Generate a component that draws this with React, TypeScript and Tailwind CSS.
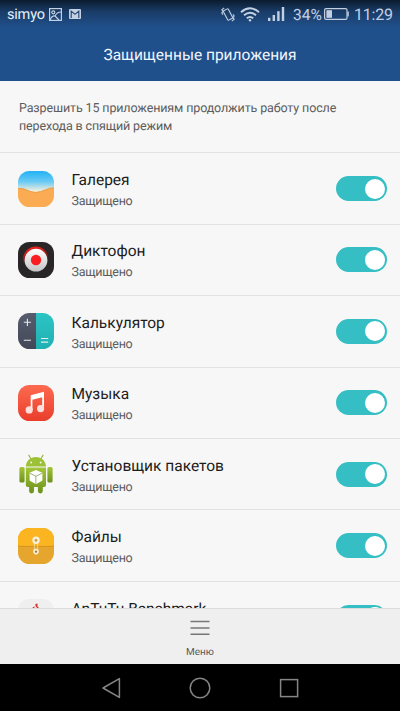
import type React from "react";

interface AppItem {
  name: string;
  icon: React.ComponentType;
}

function GalleryIcon() {
  return (
    <svg viewBox="0 0 36 36" className="w-9 h-9">
      <defs>
        <linearGradient id="sky" x1="0" y1="0" x2="0" y2="1">
          <stop offset="0" stopColor="#22b2f7" />
          <stop offset="0.3" stopColor="#6bcbf3" />
          <stop offset="0.56" stopColor="#f3efdf" />
        </linearGradient>
        <clipPath id="tile">
          <rect width="36" height="36" rx="11.5" />
        </clipPath>
      </defs>
      <g clipPath="url(#tile)">
        <rect width="36" height="36" fill="url(#sky)" />
        <path d="M0 17.2C6 16 11 21 17.5 21S30 16.2 36 16.4V36H0Z" fill="#fbab52" />
        <path d="M0 17.6C6 16.4 11 21.4 17.5 21.4S30 16.6 36 16.8" fill="none" stroke="#e8a050" strokeWidth="1" />
      </g>
    </svg>
  );
}

function RecorderIcon() {
  return (
    <svg viewBox="0 0 36 36" className="w-9 h-9">
      <defs>
        <linearGradient id="knob" x1="0" y1="0" x2="0" y2="1">
          <stop offset="0" stopColor="#ffffff" />
          <stop offset="1" stopColor="#c3c4c6" />
        </linearGradient>
        <linearGradient id="ring" x1="0.35" y1="0" x2="0.55" y2="1">
          <stop offset="0" stopColor="#f5231f" />
          <stop offset="0.3" stopColor="#b01c1b" />
          <stop offset="0.58" stopColor="#282627" />
        </linearGradient>
      </defs>
      <rect width="36" height="36" rx="11.5" fill="#282627" />
      <circle cx="17.8" cy="17.6" r="13" fill="url(#ring)" />
      <circle cx="18" cy="18.2" r="11.4" fill="url(#knob)" />
      <circle cx="18" cy="18" r="5.2" fill="#fb1d20" />
    </svg>
  );
}

function CalculatorIcon() {
  return (
    <svg viewBox="0 0 36 36" className="w-9 h-9">
      <defs>
        <linearGradient id="calcLeft" x1="0" y1="0" x2="0" y2="1">
          <stop offset="0" stopColor="#575d6e" />
          <stop offset="1" stopColor="#434857" />
        </linearGradient>
        <linearGradient id="calcRight" x1="0" y1="0" x2="0" y2="1">
          <stop offset="0" stopColor="#2dc4c4" />
          <stop offset="1" stopColor="#1fb0b2" />
        </linearGradient>
      </defs>
      <path d="M18 0H11.5A11.5 11.5 0 0 0 0 11.5V24.5A11.5 11.5 0 0 0 11.5 36H18Z" fill="url(#calcLeft)" />
      <path d="M18 0H24.5A11.5 11.5 0 0 1 36 11.5V24.5A11.5 11.5 0 0 1 24.5 36H18Z" fill="url(#calcRight)" />
      <path d="M5.8 9.3H13M9.4 5.7V12.9M5.8 27.3H13M23 25.5H30.2M23 29.1H30.2" stroke="#e3eef0" strokeWidth="1.1" />
    </svg>
  );
}

function MusicIcon() {
  return (
    <svg viewBox="0 0 36 36" className="w-9 h-9">
      <defs>
        <linearGradient id="music" x1="0" y1="0" x2="0" y2="1">
          <stop offset="0" stopColor="#fd6a50" />
          <stop offset="1" stopColor="#e93e2b" />
        </linearGradient>
      </defs>
      <rect width="36" height="36" rx="11.5" fill="url(#music)" />
      <path d="M12.7 10.2L26 6.8V23.5H24.2V12.3L14.4 14.8V25H12.7Z" fill="#fff" />
      <circle cx="11.2" cy="24.9" r="3.6" fill="#fde0dc" />
      <circle cx="22.6" cy="23.6" r="3.6" fill="#fde0dc" />
    </svg>
  );
}

function InstallerIcon() {
  return (
    <svg viewBox="0 0 36 40" className="w-9 h-10">
      <defs>
        <linearGradient id="droid" x1="0" y1="0" x2="0" y2="1">
          <stop offset="0" stopColor="#a2c538" />
          <stop offset="1" stopColor="#6d921c" />
        </linearGradient>
      </defs>
      <path d="M12.6 4.2L10.8 1.2M23.2 4.2L25 1.2" stroke="#8fb32f" strokeWidth="1.1" strokeLinecap="round" />
      <path d="M7.8 12.6C8.2 6.6 12.4 3 17.9 3S27.6 6.6 28 12.6Z" fill="#9dc136" />
      <circle cx="13.2" cy="8.5" r="0.9" fill="#fff" />
      <circle cx="22.6" cy="8.5" r="0.9" fill="#fff" />
      <g fill="url(#droid)">
        <rect x="1.4" y="13" width="5.2" height="15.6" rx="1.6" />
        <rect x="29.4" y="13" width="5.2" height="15.6" rx="1.6" />
        <path d="M7.8 13.8H28V31a2 2 0 0 1-2 2H24.8V37a2.4 2.4 0 0 1-4.9 0V33H16V37a2.4 2.4 0 0 1-4.9 0V33H9.8a2 2 0 0 1-2-2Z" />
      </g>
      <path d="M7.8 13.6H28" stroke="#c3d88a" strokeWidth="0.7" />
      <path d="M17.9 16L24.4 18.8V26.6L17.9 30.2L11.6 26.6V18.8Z" fill="#fff" />
      <path d="M11.8 19.2L17.9 22.3L24.2 19.2M17.9 22.3V30" fill="none" stroke="#829f55" strokeWidth="0.8" />
    </svg>
  );
}

function FilesIcon() {
  return (
    <svg viewBox="0 0 36 36" className="w-9 h-9">
      <defs>
        <clipPath id="filesTile">
          <rect width="36" height="36" rx="11.5" />
        </clipPath>
      </defs>
      <g clipPath="url(#filesTile)">
        <rect width="36" height="36" fill="#e6a52d" />
        <path d="M0 0H36V17Q36 18 34 18H2Q0 18 0 17Z" fill="#fbb521" />
        <path d="M0 17.4Q0.5 18.4 2 18.4H34Q35.5 18.4 36 17.4" fill="none" stroke="#d2921c" strokeWidth="0.9" />
      </g>
      <path d="M16.4 14V23M19.6 14V23" stroke="#f2dcaa" strokeWidth="0.8" />
      <circle cx="18" cy="12.3" r="2.6" fill="#cfa04b" stroke="#faf1dc" strokeWidth="2.2" />
      <circle cx="18" cy="23.6" r="2" fill="#a67a2c" stroke="#faf1dc" strokeWidth="1.6" />
    </svg>
  );
}

function AntutuIcon() {
  return (
    <svg viewBox="0 0 36 36" className="w-9 h-9">
      <rect width="36" height="36" rx="11.5" fill="#efefef" />
      <path d="M13.5 9.5L16.5 7.2V20H13.5ZM17.5 5L19.5 4.4V7.5L22 10V20H18.8V8.5L17.5 7Z" fill="#d92b2b" />
    </svg>
  );
}

const apps: AppItem[] = [
  { name: "Галерея", icon: GalleryIcon },
  { name: "Диктофон", icon: RecorderIcon },
  { name: "Калькулятор", icon: CalculatorIcon },
  { name: "Музыка", icon: MusicIcon },
  { name: "Установщик пакетов", icon: InstallerIcon },
  { name: "Файлы", icon: FilesIcon },
  { name: "AnTuTu Benchmark", icon: AntutuIcon },
];

function StatusBar() {
  return (
    <div className="flex items-center h-7 pl-[7px] pr-[7px] text-[#c3d0e2]">
      <span className="w-[38px] text-[14.5px] tracking-[-0.2px] leading-7 pt-0.5 text-[#e9eff7]">simyo</span>
      <svg viewBox="0 0 13 13" className="w-[13px] h-[13px] ml-1" fill="none" stroke="currentColor" strokeWidth="1.2">
        <rect x="0.6" y="0.6" width="11.8" height="11.8" />
        <circle cx="4.3" cy="4.3" r="1.5" />
        <path d="M1 12Q3 7.5 6 8Q8 4 12 4M6 8L10 12" />
      </svg>
      <svg viewBox="0 0 12 10" className="w-3 h-2.5 ml-[7px]">
        <rect width="12" height="10" rx="1" fill="currentColor" />
        <path d="M2.2 9V2.2L6 5.4L9.8 2.2V9" fill="none" stroke="#24466f" strokeWidth="1.1" />
      </svg>
      <svg viewBox="0 0 14 15" className="w-3.5 h-[15px] ml-auto" fill="none" stroke="currentColor" strokeWidth="1.1">
        <rect x="4.2" y="2.2" width="5.6" height="10.6" rx="0.8" transform="rotate(-28 7 7.5)" />
        <path d="M3.2 0.8L0.8 2.8L2 4.2L0.8 6L2 7.6M10.8 14.2L13.2 12.2L12 10.8L13.2 9L12 7.4" />
      </svg>
      <svg viewBox="0 0 20 15" className="w-5 h-[15px] ml-[5px]" fill="none" stroke="currentColor" strokeWidth="1.9">
        <path d="M1 5.2Q10 -2.6 19 5.2" />
        <path d="M4 8.3Q10 3 16 8.3" />
        <path d="M6.8 11.3Q10 8.5 13.2 11.3" />
        <circle cx="10" cy="13.2" r="1.2" fill="currentColor" stroke="none" />
      </svg>
      <svg viewBox="0 0 17 14" className="w-[17px] h-3.5 ml-2" fill="currentColor">
        <rect x="0" y="10.8" width="2.4" height="3.2" />
        <rect x="4.6" y="8" width="2.4" height="6" />
        <rect x="9.2" y="4.2" width="2.4" height="9.8" />
        <rect x="13.8" y="0" width="2.4" height="14" />
      </svg>
      <span className="ml-2 text-[15.5px] leading-7 pt-px w-[30px]">34%</span>
      <svg viewBox="0 0 25 12" className="w-[25px] h-3 ml-px">
        <rect x="0.6" y="0.6" width="22.4" height="10.8" rx="1.5" fill="none" stroke="currentColor" strokeWidth="1.2" />
        <rect x="2.4" y="2.2" width="5.6" height="7.6" fill="currentColor" />
        <rect x="23.4" y="3.6" width="1.4" height="4.8" fill="currentColor" />
      </svg>
      <span className="ml-[5px] w-[39px] text-[16px] tracking-[-0.2px] leading-7 pt-px">11:29</span>
    </div>
  );
}

function Toggle() {
  return (
    <div className="w-[51px] h-[25px] rounded-full bg-[#35bfc4] flex items-center justify-end pr-0.5 shrink-0">
      <div className="w-5 h-5 rounded-full bg-white"></div>
    </div>
  );
}

function AppRow({ name, icon: Icon }: AppItem) {
  return (
    <div className="h-[71.45px] shrink-0 flex items-center border-t border-[#e2e2e2] pl-[18px] pr-[13px]">
      <div className="w-9 flex justify-center shrink-0">
        <Icon />
      </div>
      <div className="ml-[17.5px] flex-1 pt-[5px]">
        <div className="text-[15.5px] leading-[20px] text-[#1c1c1c]">{name}</div>
        <div className="mt-0.5 text-[12.5px] tracking-[-0.28px] leading-[20px] text-[#5c5c5c]">Защищено</div>
      </div>
      <Toggle />
    </div>
  );
}

export default function App() {
  return (
    <div className="w-[400px] h-[711px] flex flex-col overflow-hidden bg-[#f7f7f7] font-['Roboto',sans-serif] [text-rendering:geometricPrecision]">
      <header className="h-[81px] shrink-0 bg-[linear-gradient(to_bottom,#0b1b2e_0px,#1a3d69_12px,#20508c_28px)]">
        <StatusBar />
        <h1 className="text-center text-[15.5px] leading-[55px] text-[#f2f6fb]">Защищенные приложения</h1>
      </header>

      <main className="flex-1 min-h-0 overflow-hidden flex flex-col">
        <p className="h-[71.3px] shrink-0 pl-[19px] pr-10 pt-[18.5px] text-[12.5px] tracking-[-0.13px] leading-[18px] text-[#5c5c5c]">
          Разрешить 15 приложениям продолжить работу после перехода в спящий режим
        </p>
        {apps.map((app) => (
          <AppRow key={app.name} {...app} />
        ))}
      </main>

      <div className="h-14 shrink-0 bg-[#efefef] border-t border-[#dcdcdc] flex flex-col items-center">
        <svg viewBox="0 0 20 16" className="w-5 h-4 mt-[11px]" stroke="#777" strokeWidth="1.6">
          <path d="M0.5 1.5H19.5M0.5 8H19.5M0.5 14.2H19.5" />
        </svg>
        <span className="mt-[9px] text-[10px] leading-4 text-[#5a5a5a]">Меню</span>
      </div>

      <nav className="h-[47px] shrink-0 bg-black flex items-center justify-between pl-[101px] pr-[101px]">
        <svg viewBox="0 0 20 22" className="w-5 h-[22px]" fill="none" stroke="#858585" strokeWidth="1.5" strokeLinejoin="round">
          <path d="M2 11L18.4 1.6V20.4Z" />
        </svg>
        <svg viewBox="0 0 22 22" className="w-[22px] h-[22px]" fill="none" stroke="#858585" strokeWidth="1.5">
          <circle cx="11" cy="11" r="9.8" />
        </svg>
        <svg viewBox="0 0 20 20" className="w-5 h-5" fill="none" stroke="#858585" strokeWidth="1.5">
          <rect x="1.6" y="1.6" width="17" height="17" />
        </svg>
      </nav>
    </div>
  );
}
